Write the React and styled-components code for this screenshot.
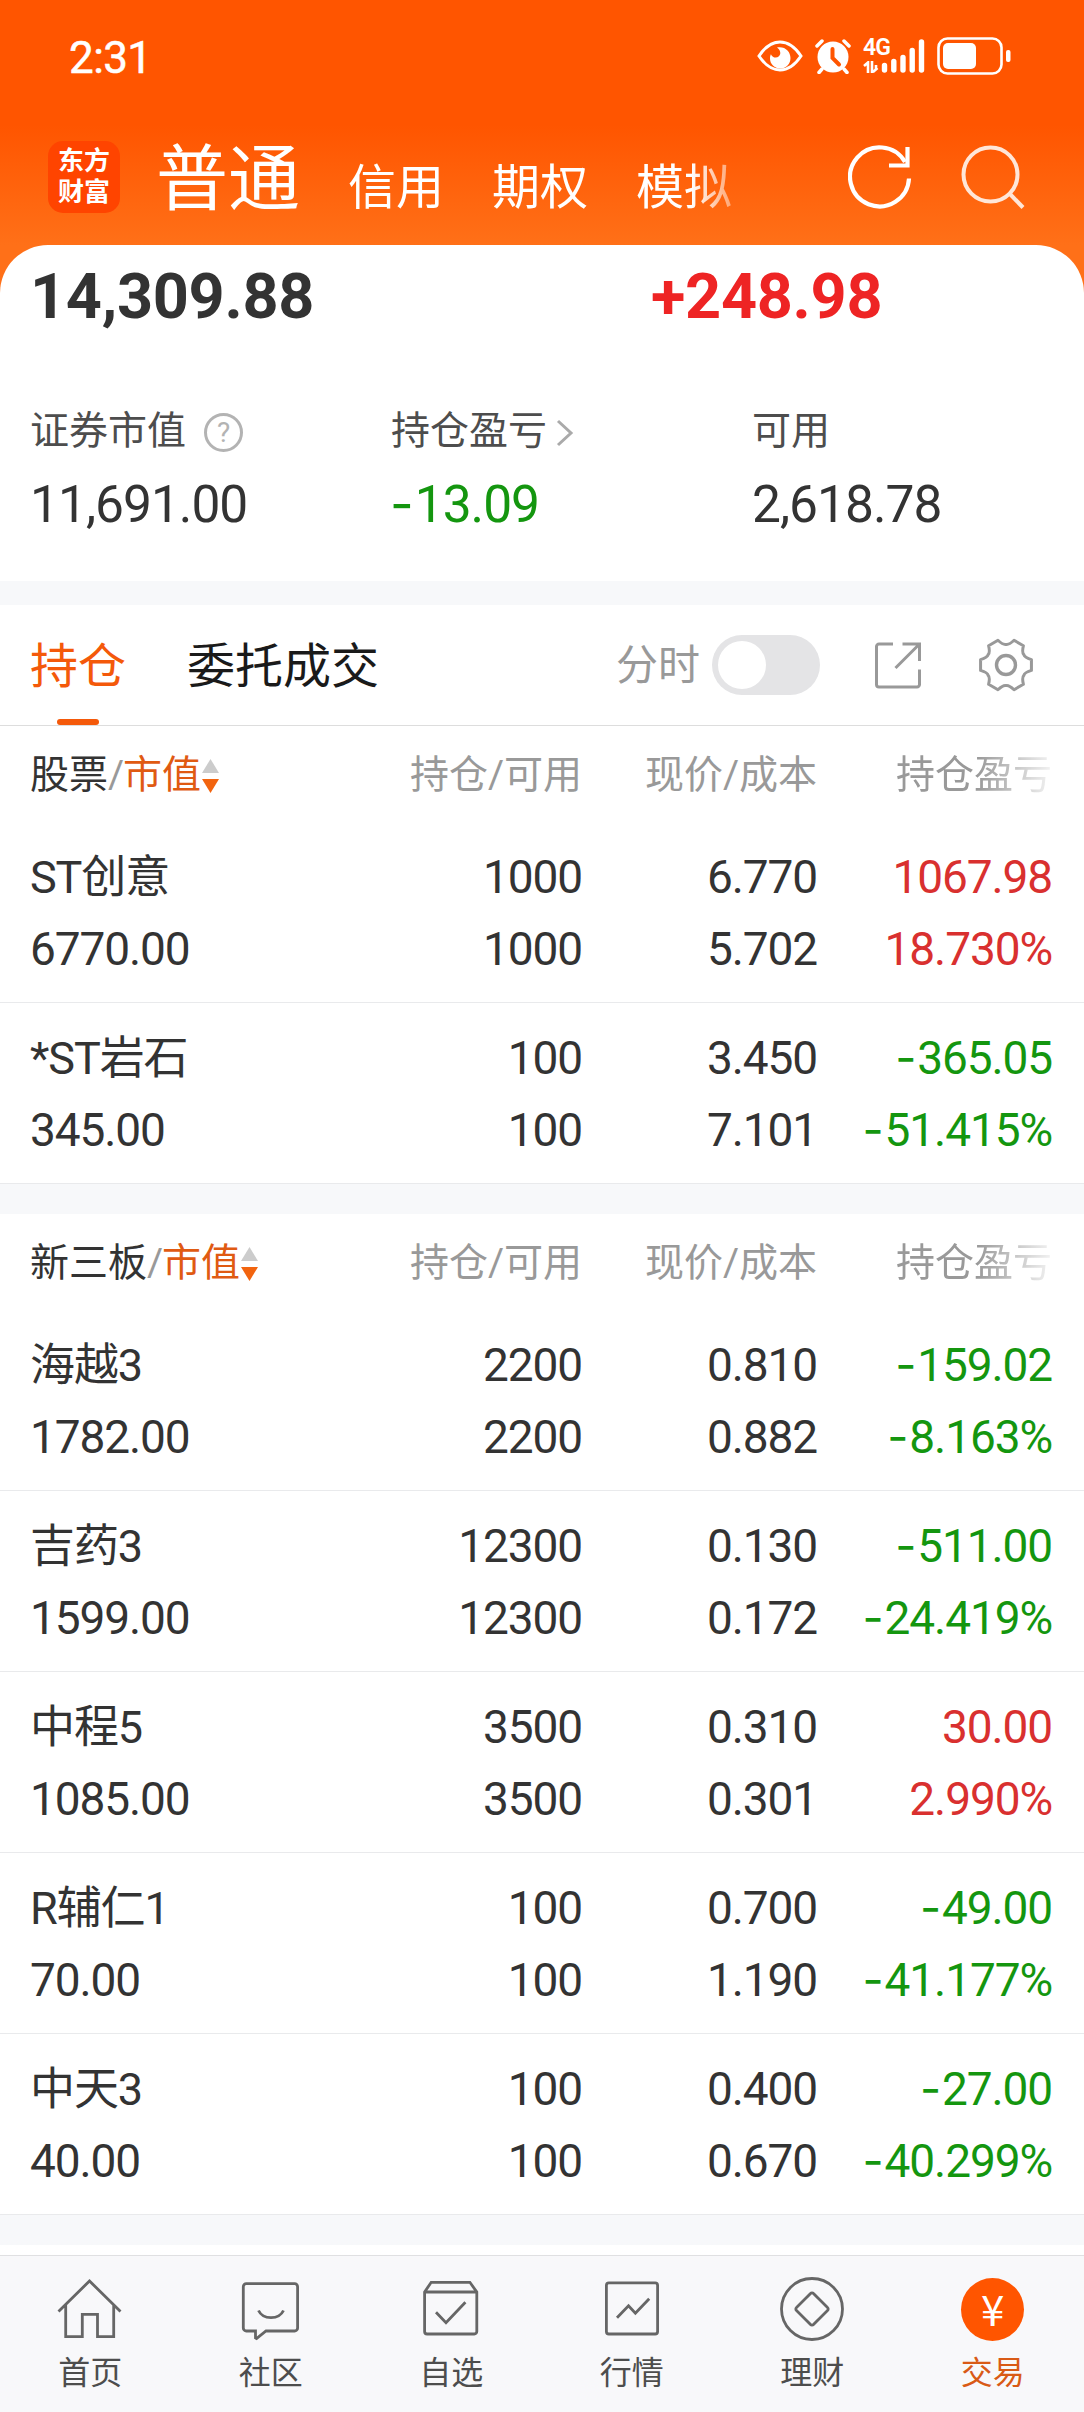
import React from 'react';
import styled, { createGlobalStyle } from 'styled-components';

const GlobalStyle = createGlobalStyle`
  * {
    box-sizing: border-box;
  }
  body {
    margin: 0;
    background: #fff;
    color: #333;
    font-family: Roboto, 'Noto Sans CJK SC', sans-serif;
  }
  svg {
    display: block;
    flex: none;
  }
`;

const stockGroups = [
  {
    title: '股票',
    rows: [
      { name: 'ST创意', value: '6770.00', held: '1000', usable: '1000', price: '6.770', cost: '5.702', profit: '1067.98', rate: '18.730%' },
      { name: '*ST岩石', value: '345.00', held: '100', usable: '100', price: '3.450', cost: '7.101', profit: '-365.05', rate: '-51.415%' },
    ],
  },
  {
    title: '新三板',
    rows: [
      { name: '海越3', value: '1782.00', held: '2200', usable: '2200', price: '0.810', cost: '0.882', profit: '-159.02', rate: '-8.163%' },
      { name: '吉药3', value: '1599.00', held: '12300', usable: '12300', price: '0.130', cost: '0.172', profit: '-511.00', rate: '-24.419%' },
      { name: '中程5', value: '1085.00', held: '3500', usable: '3500', price: '0.310', cost: '0.301', profit: '30.00', rate: '2.990%' },
      { name: 'R辅仁1', value: '70.00', held: '100', usable: '100', price: '0.700', cost: '1.190', profit: '-49.00', rate: '-41.177%' },
      { name: '中天3', value: '40.00', held: '100', usable: '100', price: '0.400', cost: '0.670', profit: '-27.00', rate: '-40.299%' },
    ],
  },
];

// six lobes, with a shallow notch between each pair
const gearPath = (() => {
  const at = (deg, r) => {
    const a = (deg * Math.PI) / 180;
    return `${(27 + r * Math.cos(a)).toFixed(2)} ${(27 + r * Math.sin(a)).toFixed(2)}`;
  };
  let d = `M${at(-12, 26)}`;
  for (let i = 0; i < 6; i++) {
    const t = i * 60;
    d += `L${at(t + 12, 26)}Q${at(t + 22, 20)} ${at(t + 30, 20.6)}Q${at(t + 38, 20)} ${at(t + 48, 26)}`;
  }
  return `${d}Z`;
})();

const Signed = ({ children }) =>
  children.startsWith('-') ? (
    <>
      <Minus>-</Minus>
      {children.slice(1)}
    </>
  ) : (
    children
  );

const StatusIcons = () => (
  <StatusRight>
    <svg width="46" height="34" viewBox="0 0 46 34" fill="none">
      <path d="M2 17C8 8 15 3 23 3s15 5 21 14c-6 9-13 14-21 14S8 26 2 17z" stroke="#fff" strokeWidth="3" />
      <path d="M20 8.500c8-1.500 13.500 4 13.500 10.500 0 6-4.500 10.500-10 10.500-6 0-10.500-4.500-10.500-10 0-2 .3-3 .9-4.300 1.600 3.600 5.600 4.300 8 2.100 2.500-2.300 1.600-6.300-1.900-8.800z" fill="#fff" />
    </svg>
    <svg width="36" height="36" viewBox="0 0 36 36" fill="none" stroke="#fff" strokeLinecap="round">
      <circle cx="18" cy="19" r="15.500" fill="#fff" stroke="none" />
      <path d="M2 8l5-5M34 8l-5-5M7 31l-3 3.500M29 31l3 3.500" strokeWidth="3.500" />
      <path d="M17.500 11v9l6.500 6.500" stroke="#ff5500" strokeWidth="4" />
    </svg>
    <Signal>
      <Network>
        <span>4G</span>
        <svg width="16" height="12" viewBox="0 0 16 12" fill="none" stroke="#fff" strokeWidth="2.600">
          <path d="M1 5l4-3.500V12M9 0v12M10 11l4.500-4M13 4v4" />
        </svg>
      </Network>
      <svg width="44" height="34" viewBox="0 0 44 34" stroke="#fff" strokeWidth="5.400" strokeLinecap="round">
        <path d="M3.500 26.500v4.500M12.800 22.500v8.500M22 18.500v12.500M31.200 11.500v19.500M40.500 3v28" />
      </svg>
    </Signal>
    <svg width="74" height="38" viewBox="0 0 74 38" fill="none">
      <rect x="1.500" y="1.500" width="63" height="35" rx="9" stroke="#fff" strokeWidth="2.600" />
      <rect x="6" y="6" width="33" height="26" rx="5" fill="#fff" />
      <rect x="69" y="13" width="4.500" height="12" rx="2" fill="#fff" />
    </svg>
  </StatusRight>
);

const navItems = [
  {
    label: '首页',
    icon: <path d="M1.500 35.500L32.500 5l31 30.500M8.700 29v31.700h16.600V38.300h15.200v22.400h16.200V29" />,
  },
  {
    label: '社区',
    icon: (
      <>
        <path d="M8.300 7.700h48.300a3 3 0 0 1 3 3V52a3 3 0 0 1-3 3H28l-9.500 7.500L17.500 62v-7H8.300a3 3 0 0 1-3-3V10.700a3 3 0 0 1 3-3z" />
        <path d="M20.500 34.500C25 44 41 44 45.500 34.500" />
      </>
    ),
  },
  {
    label: '自选',
    icon: (
      <>
        <path d="M6.600 16l6.600-9.700h38.700L58.800 16v39.500a2.500 2.500 0 0 1-2.500 2.500H9.100a2.500 2.500 0 0 1-2.500-2.500zM6.600 16h52.200" />
        <path d="M18 36.300l10 10.400 19.400-20.400" />
      </>
    ),
  },
  {
    label: '行情',
    icon: (
      <>
        <rect x="7.400" y="6.800" width="51.200" height="51.200" rx="2.500" />
        <path d="M18 41.700l11.500-12 6.900 7.600 13.800-14.600" />
      </>
    ),
  },
  {
    label: '理财',
    icon: (
      <>
        <circle cx="33" cy="33" r="30.500" />
        <path d="M31.500 17.500a2 2 0 0 1 3 0l14 14a2 2 0 0 1 0 3l-14 14a2 2 0 0 1-3 0l-14-14a2 2 0 0 1 0-3z" />
      </>
    ),
  },
  { label: '交易', active: true },
];

const Group = ({ title, rows }) => (
  <section>
    <TableHead>
      <HeadTitle>
        {title}
        <Slash>/</Slash>
        <Accent>市值</Accent>
        <svg width="17" height="36" viewBox="0 0 17 36">
          <path d="M0 15L8.500 1 17 15z" fill="#ccc" />
          <path d="M0 21h17L8.500 35z" fill="#f2640f" />
        </svg>
      </HeadTitle>
      <HeadCell>持仓/可用</HeadCell>
      <HeadCell>现价/成本</HeadCell>
      <HeadCell $fade>持仓盈亏</HeadCell>
    </TableHead>
    {rows.map((row) => (
      <Row key={row.name}>
        <NameCell>{row.name}</NameCell>
        <Cell>{row.held}</Cell>
        <Cell>{row.price}</Cell>
        <Cell $down={row.profit.startsWith('-')} $up={!row.profit.startsWith('-')}>
          <Signed>{row.profit}</Signed>
        </Cell>
        <Cell $left>{row.value}</Cell>
        <Cell>{row.usable}</Cell>
        <Cell>{row.cost}</Cell>
        <Cell $down={row.rate.startsWith('-')} $up={!row.rate.startsWith('-')}>
          <Signed>{row.rate}</Signed>
        </Cell>
      </Row>
    ))}
    <Band $height={30} />
  </section>
);

const App = () => (
  <Page>
    <GlobalStyle />
    <Header>
      <StatusBar>
        <Clock>2:31</Clock>
        <StatusIcons />
      </StatusBar>
      <TopNav>
        <Logo>
          <span>东方</span>
          <span>财富</span>
        </Logo>
        <AccountTabs>
          <AccountTab $active>普通</AccountTab>
          <AccountTab>信用</AccountTab>
          <AccountTab>期权</AccountTab>
          <AccountTab>模拟</AccountTab>
        </AccountTabs>
        <TopActions>
          <svg width="64" height="64" viewBox="0 0 64 64" fill="none" stroke="#fff" strokeWidth="4.200">
            <path d="M61 33.500A29.500 29.500 0 1 1 57 17" />
            <path d="M59.500 2v18.500H41" />
          </svg>
          <svg width="64" height="64" viewBox="0 0 64 64" fill="none" stroke="#ffe6d8" strokeWidth="4">
            <circle cx="29.500" cy="29.500" r="27" />
            <path d="M48 48l14 14.500" />
          </svg>
        </TopActions>
      </TopNav>
    </Header>

    <Sheet>
      <Totals>
        <Total>14,309.88</Total>
        <Total $up>+248.98</Total>
      </Totals>
      <Stats>
        <Stat>
          <StatLabel>
            证券市值
            <Help>?</Help>
          </StatLabel>
          <StatValue>11,691.00</StatValue>
        </Stat>
        <Stat>
          <StatLabel>
            持仓盈亏
            <Chevron width="18" height="28" viewBox="0 0 18 28" fill="none" stroke="#aaa" strokeWidth="3">
              <path d="M2 2l13 12L2 26" />
            </Chevron>
          </StatLabel>
          <StatValue $down>
            <Signed>-13.09</Signed>
          </StatValue>
        </Stat>
        <Stat>
          <StatLabel>可用</StatLabel>
          <StatValue>2,618.78</StatValue>
        </Stat>
      </Stats>
    </Sheet>
    <Band $height={24} />

    <Toolbar>
      <Tab $active>持仓</Tab>
      <Tab>委托成交</Tab>
      <Tools>
        <ToggleLabel>分时</ToggleLabel>
        <Toggle>
          <Knob />
        </Toggle>
        <svg width="46" height="48" viewBox="0 0 46 48" fill="none" stroke="#999" strokeWidth="3">
          <path d="M18 3H4a2.500 2.500 0 0 0-2.500 2.500v38A2.500 2.500 0 0 0 4 46h38a2.500 2.500 0 0 0 2.500-2.500V28.500" />
          <path d="M27.500 3h17v17M44 3.500L20.500 27" />
        </svg>
        <svg width="54" height="54" viewBox="0 0 54 54" fill="none" stroke="#999" strokeWidth="3" strokeLinejoin="round">
          <path d={gearPath} />
          <circle cx="27" cy="27" r="9.500" strokeWidth="3.400" />
        </svg>
      </Tools>
    </Toolbar>

    {stockGroups.map((group) => (
      <Group key={group.title} {...group} />
    ))}

    <BottomNav>
      {navItems.map((item) => (
        <NavItem key={item.label} $active={item.active}>
          {item.active ? (
            <Yuan>¥</Yuan>
          ) : (
            <svg width="66" height="66" viewBox="0 0 66 66" fill="none" stroke="#666" strokeWidth="2.800">
              {item.icon}
            </svg>
          )}
          <span>{item.label}</span>
        </NavItem>
      ))}
    </BottomNav>
  </Page>
);

const tone = ({ $up, $down }) => ($up ? '#d9302f' : $down ? '#14960f' : '#333');

const Page = styled.div`
  display: flex;
  flex-direction: column;
  width: 1084px;
  height: 2412px;
  overflow: hidden;
  background: #fff;
`;

const Header = styled.header`
  height: 293px;
  flex: none;
  background: linear-gradient(#ff5500 0, #ff5500 125px, #ff7018 245px, #ff7018 100%);
`;

const StatusBar = styled.div`
  display: flex;
  align-items: center;
  justify-content: space-between;
  height: 112px;
  padding: 0 73px 0 69px;
  color: #fff;
`;

const Clock = styled.span`
  font-size: 44px;
  line-height: 60px;
  letter-spacing: -0.6px;
  padding-top: 4px;
  -webkit-text-stroke: 0.5px #fff;
`;

const StatusRight = styled.div`
  display: flex;
  align-items: center;
  gap: 12px;
`;

const Signal = styled.div`
  display: flex;
  align-items: flex-end;
  height: 34px;
  gap: 1px;
`;

const Network = styled.div`
  display: flex;
  flex-direction: column;
  justify-content: space-between;
  width: 17px;
  height: 34px;
  font-size: 23px;
  font-weight: 600;
  line-height: 18px;
  letter-spacing: -1px;
  white-space: nowrap;
`;

const TopNav = styled.nav`
  display: flex;
  align-items: center;
  height: 130px;
  padding: 0 59px 0 48px;
`;

const Logo = styled.div`
  display: flex;
  flex-direction: column;
  align-items: center;
  justify-content: center;
  width: 72px;
  height: 72px;
  border-radius: 15px;
  background: #ff4400;
  color: #fff;
  font-size: 26px;
  font-weight: 700;
  line-height: 31px;
`;

const AccountTabs = styled.div`
  display: flex;
  align-items: baseline;
  width: 610px;
  margin-left: 36px;
  padding-top: 13px;
  gap: 48px;
  -webkit-mask-image: linear-gradient(90deg, #000 535px, transparent 605px);
  mask-image: linear-gradient(90deg, #000 535px, transparent 605px);
`;

const AccountTab = styled.span`
  flex: none;
  color: #fff;
  font-size: ${({ $active }) => ($active ? 72 : 48)}px;
  line-height: 88px;
`;

const TopActions = styled.div`
  display: flex;
  gap: 49px;
  margin-left: auto;
`;

const Sheet = styled.main`
  flex: none;
  height: 336px;
  margin-top: -48px;
  padding: 12px 30px 0;
  border-radius: 48px 48px 0 0;
  background: #fff;
`;

const Totals = styled.div`
  display: grid;
  grid-template-columns: 621px 1fr;
`;

const Total = styled.div`
  color: ${({ $up }) => ($up ? '#ee2424' : '#333')};
  font-size: 63px;
  font-weight: 700;
  line-height: 80px;
  letter-spacing: -0.3px;
`;

const Stats = styled.div`
  display: grid;
  grid-template-columns: 361px 361px 1fr;
  margin-top: 67px;
`;

const Stat = styled.div`
  display: flex;
  flex-direction: column;
  gap: 14px;
`;

const StatLabel = styled.div`
  display: flex;
  align-items: center;
  color: #4d4d4d;
  font-size: 39px;
  line-height: 54px;
`;

const Help = styled.span`
  width: 39px;
  height: 39px;
  margin: 3px 0 0 18px;
  border: 3px solid #b3b3b3;
  border-radius: 50%;
  color: #b3b3b3;
  font-size: 28px;
  line-height: 34px;
  text-align: center;
`;

const Chevron = styled.svg`
  margin: 3px 0 0 9px;
`;

const StatValue = styled.div`
  color: ${tone};
  font-size: 51.5px;
  line-height: 66px;
  letter-spacing: -1px;
`;

const Minus = styled.span`
  margin: 0 2px 0 -1px;
  font-family: Inter, sans-serif;
  line-height: 0;
`;

const Band = styled.div`
  flex: none;
  height: ${({ $height }) => $height}px;
  background: #f7f8fa;
`;

const Toolbar = styled.div`
  display: flex;
  flex: none;
  height: 121px;
  padding: 0 51px 0 30px;
  gap: 61px;
  border-bottom: 1px solid #ddd;
`;

const Tab = styled.div`
  display: flex;
  flex-direction: column;
  align-items: center;
  color: ${({ $active }) => ($active ? '#f4590a' : '#1a1a1a')};
  font-size: 48px;
  line-height: 123px;

  &::after {
    content: '';
    width: 42px;
    height: 6px;
    margin-top: -9px;
    border-radius: 3px;
    background: ${({ $active }) => ($active ? '#f4590a' : 'transparent')};
  }
`;

const Tools = styled.div`
  display: flex;
  align-items: center;
  margin-left: auto;

  svg {
    margin-left: 55px;
  }
  svg + svg {
    margin-left: 58px;
  }
`;

const ToggleLabel = styled.span`
  padding-top: 2px;
  color: #999;
  font-size: 42px;
  line-height: 60px;
`;

const Toggle = styled.div`
  width: 108px;
  height: 60px;
  margin-left: 12px;
  padding: 6px;
  border-radius: 30px;
  background: #e4e4e6;
`;

const Knob = styled.div`
  width: 48px;
  height: 48px;
  border-radius: 50%;
  background: #fff;
`;

const columns = '300px 252px 235px 235px';

const TableHead = styled.div`
  display: grid;
  grid-template-columns: ${columns};
  height: 96px;
  padding: 0 32px 0 30px;
  color: #999;
  font-size: 39px;
  line-height: 99px;
`;

const HeadTitle = styled.div`
  display: flex;
  align-items: center;
  color: #333;

  svg {
    margin-left: 1px;
  }
`;

const Slash = styled.span`
  margin-right: -1px;
  color: #999;
`;

const Accent = styled.span`
  color: #e05a12;
`;

const HeadCell = styled.div`
  text-align: right;
  ${({ $fade }) =>
    $fade &&
    `
    -webkit-mask-image: linear-gradient(90deg, #000 160px, transparent 245px);
    mask-image: linear-gradient(90deg, #000 160px, transparent 245px);
  `}
`;

const Row = styled.div`
  display: grid;
  grid-template-columns: ${columns};
  grid-auto-rows: 72px;
  height: 181px;
  padding: 19px 32px 17px 30px;
  border-bottom: 1px solid #e9eaec;
`;

const Cell = styled.div`
  color: ${tone};
  font-size: 46px;
  line-height: 72px;
  letter-spacing: -1.1px;
  text-align: ${({ $left }) => ($left ? 'left' : 'right')};
`;

const NameCell = styled.div`
  font-size: 45px;
  line-height: 74px;
  letter-spacing: -1.1px;
`;

const BottomNav = styled.nav`
  display: grid;
  grid-template-columns: repeat(6, 1fr);
  flex: none;
  height: 157px;
  margin-top: 10px;
  padding: 20px 1px 0 0;
  border-top: 1px solid #e0e0e2;
  background: #f8f8fa;
`;

const NavItem = styled.div`
  display: flex;
  flex-direction: column;
  align-items: center;
  gap: 8px;
  color: ${({ $active }) => ($active ? '#d95a16' : '#4d4d4d')};
  font-size: 32px;
  line-height: 46px;
`;

const Yuan = styled.div`
  width: 63px;
  height: 63px;
  margin: 2px 0 1px;
  border-radius: 50%;
  background: #ff5500;
  color: #fff;
  font: 400 42px/59px 'Noto Sans CJK JP', sans-serif;
  text-align: center;
`;

export default App;
